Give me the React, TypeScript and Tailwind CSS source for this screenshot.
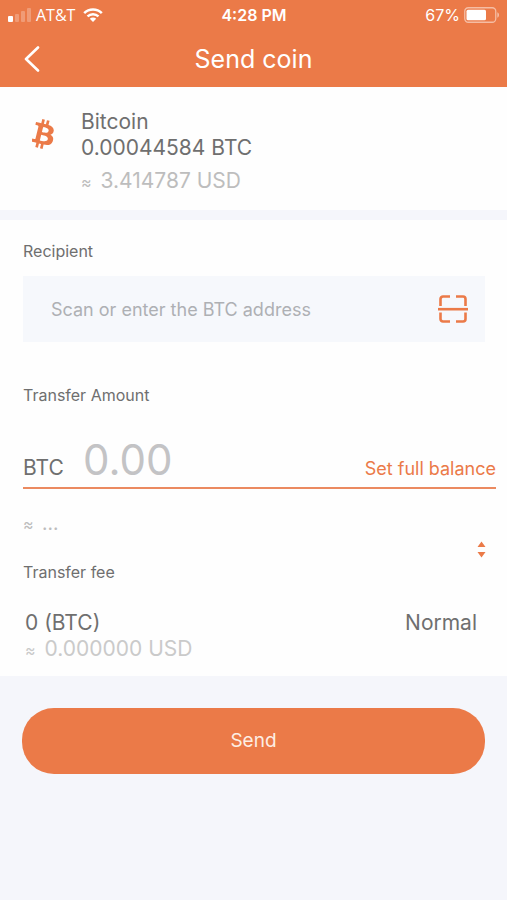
import { useState } from "react";

function SignalIcon() {
  return (
    <svg width="24" height="14" viewBox="0 0 24 14" fill="#fff" aria-hidden="true">
      <rect x="0" y="8" width="5" height="6" rx="1" />
      <rect x="7" y="6" width="4" height="8" rx="1" opacity="0.25" />
      <rect x="13" y="3" width="4" height="11" rx="1" opacity="0.25" />
      <rect x="19" y="0" width="4" height="14" rx="1" opacity="0.25" />
    </svg>
  );
}

function WifiIcon() {
  return (
    <svg width="20" height="14" viewBox="0 0 20 14" fill="none" aria-hidden="true">
      <path d="M1.2 5.1a12.6 12.6 0 0 1 17.6 0" stroke="#fff" strokeWidth="2.6" />
      <path d="M4.5 8.4a8 8 0 0 1 11 0" stroke="#fff" strokeWidth="2.4" />
      <path d="M10 14l-3.2-3.3a4.6 4.6 0 0 1 6.4 0z" fill="#fff" />
    </svg>
  );
}

function BatteryIcon() {
  return (
    <svg width="36" height="16" viewBox="0 0 36 16" fill="none" aria-hidden="true">
      <rect x="0.75" y="0.75" width="31" height="14.5" rx="3.5" stroke="#fff" strokeOpacity="0.5" strokeWidth="1.3" />
      <rect x="2.5" y="2.7" width="19.5" height="10.6" rx="1.5" fill="#fff" />
      <path d="M33.3 5.3c2.3.6 2.3 4.8 0 5.4z" fill="#fff" fillOpacity="0.5" />
    </svg>
  );
}

function BitcoinIcon() {
  return (
    <svg width="22" height="30" viewBox="8.8 6 14.5 20" fill="#eb7a48" aria-hidden="true">
      <path d="M23.189 14.02c.314-2.096-1.283-3.223-3.465-3.975l.708-2.84-1.728-.43-.69 2.765c-.454-.114-.92-.22-1.385-.326l.695-2.783L15.596 6l-.708 2.839c-.376-.086-.746-.17-1.104-.26l.002-.009-2.384-.595-.46 1.846s1.283.294 1.256.312c.7.175.826.638.805 1.006l-.806 3.235c.048.012.11.03.18.057l-.183-.045-1.13 4.532c-.086.212-.303.531-.793.41.018.025-1.256-.313-1.256-.313l-.858 1.978 2.25.561c.418.105.828.215 1.231.318l-.715 2.872 1.727.43.708-2.84c.472.127.93.245 1.378.357l-.706 2.828 1.728.43.715-2.866c2.948.558 5.164.333 6.097-2.333.752-2.146-.037-3.385-1.588-4.192 1.13-.26 1.98-1.003 2.207-2.538zm-3.95 5.538c-.533 2.147-4.148.986-5.32.695l.95-3.805c1.172.293 4.929.872 4.37 3.11zm.535-5.569c-.487 1.953-3.495.96-4.47.717l.86-3.45c.975.243 4.118.696 3.61 2.733z" />
    </svg>
  );
}

function ScanIcon() {
  return (
    <svg width="30" height="28" viewBox="0 0 30 28" fill="none" stroke="#eb7a48" strokeWidth="2.6" aria-hidden="true">
      <path d="M2.5 11V4a2.5 2.5 0 0 1 2.5-2.5h7M18 1.5h7A2.5 2.5 0 0 1 27.5 4v7" />
      <path d="M27.5 17.5V24a2.5 2.5 0 0 1-2.5 2.5h-7M12 26.5H5A2.5 2.5 0 0 1 2.5 24v-6.5" />
      <path d="M0 14.2h30" />
    </svg>
  );
}

function Approx() {
  return <span className="mr-[3px] text-base">≈</span>;
}

function StatusBar() {
  return (
    <div className="grid h-[30px] grid-cols-3 items-center pl-2 pr-[7px] text-base leading-5">
      <div className="flex items-center">
        <SignalIcon />
        <span className="ml-1 font-['Open_Sans','Noto_Sans',sans-serif]">AT&amp;T</span>
        <span className="ml-2">
          <WifiIcon />
        </span>
      </div>
      <span className="text-center font-semibold">4:28 PM</span>
      <div className="flex items-center justify-end gap-1">
        <span>67%</span>
        <BatteryIcon />
      </div>
    </div>
  );
}

export default function App() {
  const [address, setAddress] = useState("");
  const [amount, setAmount] = useState("");
  const [speed, setSpeed] = useState("Normal");

  return (
    <div className="min-h-screen bg-[#f5f6fb] font-['Inter','Liberation_Sans',sans-serif] text-[#6f6f6f]">
      <header className="bg-[#eb7a48] text-white">
        <StatusBar />
        <div className="grid h-[57px] grid-cols-[48px_1fr_48px] items-center">
          <button type="button" aria-label="Back" className="flex h-full items-center pl-6">
            <svg width="16" height="26" viewBox="0 0 16 26" fill="none" stroke="#fff" strokeWidth="2.6" strokeLinecap="round" strokeLinejoin="round">
              <path d="M14 1.5L2 13l12 11.5" />
            </svg>
          </button>
          <h1 className="text-center text-[25px] leading-8">Send coin</h1>
        </div>
      </header>

      <main>
        {/* Account */}
        <section className="flex bg-[#fefefe] pb-4 pl-8 pt-[22px]">
          <div className="w-[49px] shrink-0 pt-[10px]">
            <BitcoinIcon />
          </div>
          <div className="text-[21px] leading-[26px]">
            <h2>Bitcoin</h2>
            <p>0.00044584 BTC</p>
            <p className="mt-[7px] text-[#bdbdbd]">
              <Approx /> 3.414787 USD
            </p>
          </div>
        </section>

        {/* Transfer form */}
        <form onSubmit={(e) => e.preventDefault()}>
          <div className="mt-[10px] bg-[#fefefe] pb-[14px] pt-[19px]">
            <div className="pl-[23px] pr-[22px]">
              <label htmlFor="recipient" className="block text-base leading-6">
                Recipient
              </label>
              <div className="mt-[13px] flex h-[66px] items-center bg-[#f6f8fc] pl-7 pr-[17px]">
                <input
                  id="recipient"
                  value={address}
                  onChange={(e) => setAddress(e.target.value)}
                  placeholder="Scan or enter the BTC address"
                  className="h-full min-w-0 flex-1 bg-transparent text-lg outline-none placeholder:text-[#aeb0b4]"
                />
                <button type="button" aria-label="Scan QR code">
                  <ScanIcon />
                </button>
              </div>
            </div>

            <div className="mt-[41px] pl-[23px] pr-[11px]">
              <label htmlFor="amount" className="block text-base leading-6">
                Transfer Amount
              </label>
              <div className="mt-[26px] flex items-baseline border-b-2 border-[#eb8a60] pb-[2px]">
                <span className="w-[60px] shrink-0 text-[21px]">BTC</span>
                <input
                  id="amount"
                  inputMode="decimal"
                  value={amount}
                  onChange={(e) => setAmount(e.target.value)}
                  placeholder="0.00"
                  className="h-[52px] min-w-0 flex-1 bg-transparent text-[42px] outline-none placeholder:text-[#c3c3c5]"
                />
                <button type="button" className="text-lg text-[#eb7a48]">
                  Set full balance
                </button>
              </div>
              <p className="mt-[22px] text-[19px] leading-[26px] text-[#bdbdbd]">
                <Approx /> ...
              </p>
              <div className="mt-1 flex justify-end pr-[10px]">
                <button type="button" aria-label="Switch currency">
                  <svg width="9" height="17" viewBox="0 0 9 17" fill="#eb7a48">
                    <path d="M4.5 0.5L8.5 6h-8zM4.5 16.5l4-5.5h-8z" />
                  </svg>
                </button>
              </div>
            </div>

            <div className="mt-[2px] pl-[23px] pr-[22px]">
              <label htmlFor="speed" className="block text-base leading-6">
                Transfer fee
              </label>
              <div className="mt-[26px] flex items-start justify-between pl-[2px] pr-2 text-[21px] leading-[26px]">
                <div>
                  <p>0 (BTC)</p>
                  <p className="text-[#cacaca]">
                    <Approx /> 0.000000 USD
                  </p>
                </div>
                <select
                  id="speed"
                  value={speed}
                  onChange={(e) => setSpeed(e.target.value)}
                  className="appearance-none bg-transparent text-right outline-none"
                >
                  <option>Slow</option>
                  <option>Normal</option>
                  <option>Fast</option>
                </select>
              </div>
            </div>
          </div>

          <div className="px-[22px] py-8">
            <button type="submit" className="h-[66px] w-full rounded-[32px] bg-[#eb7a48] text-[19px] text-[#fdeee4]">
              Send
            </button>
          </div>
        </form>
      </main>
    </div>
  );
}
